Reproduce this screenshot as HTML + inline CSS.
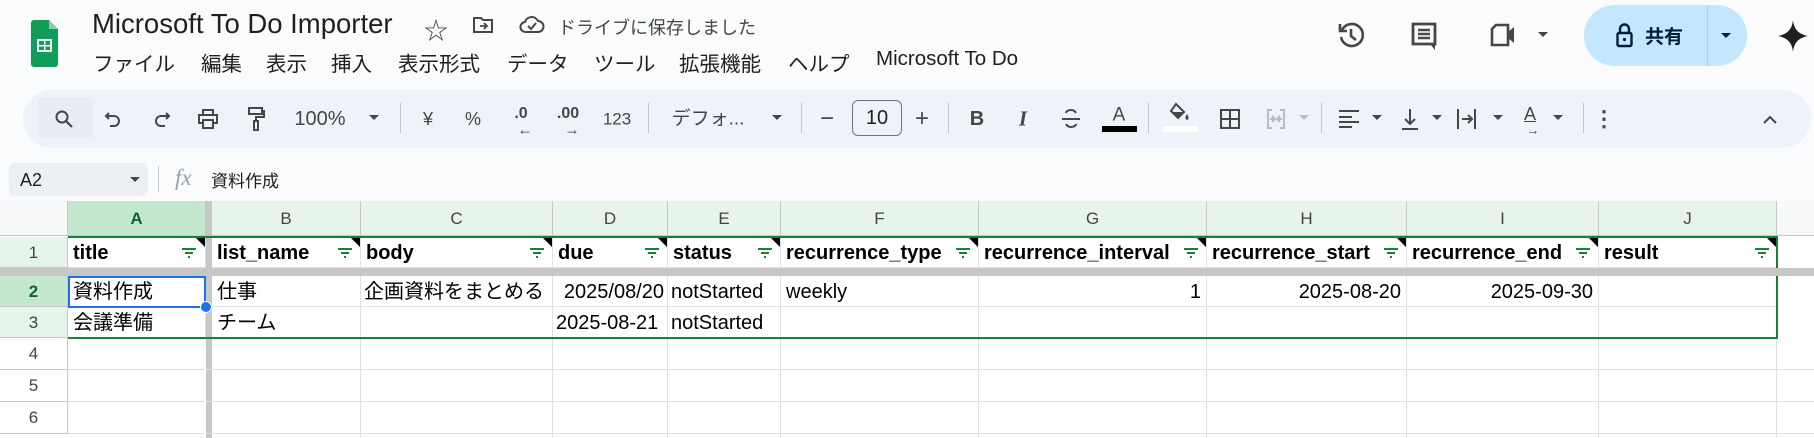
<!DOCTYPE html>
<html><head><meta charset="utf-8"><style>
*{margin:0;padding:0;box-sizing:border-box}
body{width:1814px;height:438px;overflow:hidden;background:#f9fbfd;font-family:"Liberation Sans","Noto Sans CJK JP",sans-serif;color:#1f1f1f;position:relative}
.a{position:absolute;white-space:nowrap}
.menu{top:47px;font-size:20.5px;color:#1f1f1f}
.tb{position:absolute;left:23px;top:90px;width:1788px;height:58px;background:#eef2f9;border-radius:29px}
.ic{position:absolute;top:119px;transform:translate(-50%,-50%);color:#444746;font-size:19px;line-height:1}
.sep{position:absolute;top:103px;width:1px;height:30px;background:#c7c7c7}
.dd{position:absolute;top:115px;width:0;height:0;border-left:5px solid transparent;border-right:5px solid transparent;border-top:5px solid #444746;transform:translateX(-50%)}
.grid{position:absolute;left:0;top:201px;width:1814px;height:237px;background:#fff}
.h{position:absolute;top:0;height:35px;background:#e6f4ea;border-right:1px solid #c7c7c7;border-bottom:1px solid #c7c7c7;color:#444;font-size:17px;text-align:center;line-height:35px}
.rh{position:absolute;left:0;width:68px;border-bottom:1px solid #c7c7c7;border-right:1px solid #c7c7c7;color:#444;font-size:17px;text-align:center}
.c{position:absolute;font-size:20px;color:#000;line-height:33px;height:31px;border-right:1px solid #e1e1e1;border-bottom:1px solid #e1e1e1;padding:0 5px;overflow:hidden}
.b{font-weight:bold}
.f{position:absolute;width:14px;height:10px}
.tri{position:absolute;width:0;height:0;border-top:9px solid #000;border-left:9px solid transparent}
</style></head><body>
<svg class="a" style="left:31px;top:20px" width="27" height="47" viewBox="0 0 27 47"><path d="M3 0h15l9 9v35a3 3 0 0 1-3 3H3a3 3 0 0 1-3-3V3a3 3 0 0 1 3-3z" fill="#0f9d58"/><path d="M18 0l9 9h-9z" fill="#87ceac"/><rect x="6" y="19" width="15" height="13" fill="#fff"/><rect x="8" y="21" width="5" height="4" fill="#0f9d58"/><rect x="14.5" y="21" width="4.5" height="4" fill="#0f9d58"/><rect x="8" y="26.5" width="5" height="3.5" fill="#0f9d58"/><rect x="14.5" y="26.5" width="4.5" height="3.5" fill="#0f9d58"/></svg>
<div class="a" style="left:92px;top:8px;font-size:27.5px;color:#1f1f1f">Microsoft To Do Importer</div>
<div class="a" style="left:424px;top:11px;font-size:24px;color:#444746">☆</div>
<svg class="a" style="left:472px;top:16px" width="22" height="18" viewBox="0 0 22 18"><path d="M2 2h7l2 2h9v12H2z" fill="none" stroke="#444746" stroke-width="2"/><path d="M8 10h7M12 7l3 3-3 3" fill="none" stroke="#444746" stroke-width="1.8"/></svg>
<svg class="a" style="left:519px;top:14px" width="26" height="20" viewBox="0 0 26 20"><path d="M7 18a5 5 0 0 1-1-10 7 7 0 0 1 13-1 5.5 5.5 0 0 1 0 11z" fill="none" stroke="#444746" stroke-width="2"/><path d="M9 12l3 3 5-6" fill="none" stroke="#444746" stroke-width="2"/></svg>
<div class="a" style="left:558px;top:14px;font-size:18px;color:#444746">ドライブに保存しました</div>
<div class="a menu" style="left:93px">ファイル</div>
<div class="a menu" style="left:201px">編集</div>
<div class="a menu" style="left:266px">表示</div>
<div class="a menu" style="left:331px">挿入</div>
<div class="a menu" style="left:398px">表示形式</div>
<div class="a menu" style="left:507px">データ</div>
<div class="a menu" style="left:594px">ツール</div>
<div class="a menu" style="left:679px">拡張機能</div>
<div class="a menu" style="left:788px">ヘルプ</div>
<div class="a menu" style="left:876px">Microsoft To Do</div>
<svg class="a" style="left:1337px;top:21px" width="28" height="28" viewBox="0 0 28 28"><path d="M5 9a11 11 0 1 1-1 7" fill="none" stroke="#444746" stroke-width="2.6"/><path d="M3 3v7h7" fill="none" stroke="#444746" stroke-width="2.6"/><path d="M14 8v7l5 4" fill="none" stroke="#444746" stroke-width="2.6"/></svg>
<svg class="a" style="left:1410px;top:21px" width="28" height="30" viewBox="0 0 28 30"><path d="M3 3h22v20H3z" fill="none" stroke="#444746" stroke-width="2.8"/><path d="M20 23l5 6V22" fill="#444746"/><path d="M8 9h12M8 13h12M8 17h12" stroke="#444746" stroke-width="2.4"/></svg>
<svg class="a" style="left:1490px;top:23px" width="30" height="24" viewBox="0 0 30 24"><path d="M6 2h12v20H2V6z" fill="none" stroke="#444746" stroke-width="2.6"/><path d="M18 9l6-5v16l-6-5z" fill="#444746"/></svg>
<div class="dd" style="left:1543px;top:32px"></div>
<div class="a" style="left:1584px;top:5px;width:163px;height:61px;background:#c2e7ff;border-radius:31px"></div>
<div class="a" style="left:1707px;top:5px;width:1px;height:61px;background:#a8d4f0"></div>
<svg class="a" style="left:1616px;top:22px" width="17" height="26" viewBox="0 0 17 26"><path d="M4 11V7a4.5 4.5 0 0 1 9 0v4" fill="none" stroke="#001d35" stroke-width="2.4"/><rect x="1.5" y="11" width="14" height="13" rx="1.5" fill="none" stroke="#001d35" stroke-width="2.4"/><circle cx="8.5" cy="17.5" r="1.6" fill="#001d35"/></svg>
<div class="a" style="left:1645px;top:22px;font-size:19px;font-weight:bold;color:#001d35">共有</div>
<div class="dd" style="left:1726px;top:33px;border-top-color:#001d35"></div>
<svg class="a" style="left:1778px;top:20px" width="30" height="32" viewBox="0 0 30 32"><path d="M15 0C16 9 20 14 30 16 20 18 16 23 15 32 14 23 10 18 0 16 10 14 14 9 15 0z" fill="#1f1f1f"/></svg>
<div class="tb"></div>
<div class="a" style="left:38px;top:97px;width:55px;height:41px;background:#e7ecf5;border-radius:4px"></div>
<svg class="ic" style="left:64px" width="20" height="20" viewBox="0 0 20 20"><circle cx="8" cy="8" r="5.5" fill="none" stroke="#444746" stroke-width="2"/><path d="M12 12l6 6" stroke="#444746" stroke-width="2.2"/></svg>
<svg class="ic" style="left:113px" width="18" height="18" viewBox="0 0 18 18"><path d="M5 3L2 6l3 3M2 6h8a5 5 0 0 1 0 10H6" fill="none" stroke="#444746" stroke-width="2"/></svg>
<svg class="ic" style="left:162px" width="18" height="18" viewBox="0 0 18 18"><path d="M13 3l3 3-3 3M16 6H8a5 5 0 0 0 0 10h4" fill="none" stroke="#444746" stroke-width="2"/></svg>
<svg class="ic" style="left:208px" width="22" height="20" viewBox="0 0 22 20"><path d="M6 6V1h10v5M6 14H2V6h18v8h-4M6 11h10v8H6z" fill="none" stroke="#444746" stroke-width="2"/></svg>
<svg class="ic" style="left:256px" width="18" height="24" viewBox="0 0 18 24"><path d="M2 1h13v6H2zM15 4h2v6H9v4M7 14h4v9H7z" fill="none" stroke="#444746" stroke-width="2"/></svg>
<div class="ic" style="left:320px;font-size:20px">100%</div>
<div class="dd" style="left:374px"></div>
<div class="sep" style="left:400px"></div>
<div class="ic" style="left:428px;font-size:18px">¥</div>
<div class="ic" style="left:473px;font-size:18px">%</div>
<div class="ic" style="left:521px;font-size:16px;font-weight:bold;top:114px">.0</div><div class="ic b" style="left:525px;font-size:15px;top:130px">←</div>
<div class="ic" style="left:568px;font-size:16px;font-weight:bold;top:114px">.00</div><div class="ic b" style="left:572px;font-size:15px;top:130px">→</div>
<div class="ic" style="left:617px;font-size:17px">123</div>
<div class="sep" style="left:648px"></div>
<div class="ic" style="left:708px;font-size:19px">デフォ...</div>
<div class="dd" style="left:777px"></div>
<div class="sep" style="left:801px"></div>
<div class="ic" style="left:827px;font-size:24px">−</div>
<div class="a" style="left:852px;top:100px;width:50px;height:36px;border:1px solid #747775;border-radius:6px;font-size:20px;text-align:center;line-height:34px">10</div>
<div class="ic" style="left:922px;font-size:24px">+</div>
<div class="sep" style="left:948px"></div>
<div class="ic b" style="left:977px;font-size:20px">B</div>
<div class="ic b" style="left:1023px;font-size:21px;font-style:italic;font-family:'Liberation Serif',serif">I</div>
<svg class="ic" style="left:1071px" width="20" height="22" viewBox="0 0 20 22"><path d="M15 5c-1-2-3-3-5-3S5 3 5 5M1 11h18M5 16c1 2 3 3 5 3s5-1 5-3" fill="none" stroke="#444746" stroke-width="2"/></svg>
<div class="ic" style="left:1119px;font-size:19px;top:115px">A</div>
<div class="a" style="left:1102px;top:126px;width:35px;height:6px;background:#000"></div>
<div class="sep" style="left:1148px"></div>
<svg class="ic" style="left:1179px;top:113px" width="24" height="22" viewBox="0 0 24 22"><path d="M9 2l8 8-6 6-7-7z" fill="none" stroke="#444746" stroke-width="2"/><path d="M5 10h11l-5 5z" fill="#444746"/><path d="M20 12c-2 3-2 5 0 6 2-1 2-3 0-6z" fill="#444746"/></svg>
<div class="a" style="left:1163px;top:126px;width:35px;height:6px;background:#fff"></div>
<svg class="ic" style="left:1230px" width="22" height="22" viewBox="0 0 22 22"><path d="M2 2h18v18H2zM11 2v18M2 11h18" fill="none" stroke="#444746" stroke-width="2"/></svg>
<svg class="ic" style="left:1276px" width="20" height="22" viewBox="0 0 20 22"><path d="M6 2H2v18h4M14 2h4v18h-4M4 11h4M16 11h-4M6 8l3 3-3 3M14 8l-3 3 3 3" fill="none" stroke="#b8bcc1" stroke-width="2"/></svg>
<div class="dd" style="left:1304px;border-top-color:#b8bcc1"></div>
<div class="sep" style="left:1321px"></div>
<svg class="ic" style="left:1349px" width="22" height="20" viewBox="0 0 22 20"><path d="M1 2h20M1 8h13M1 13h20M1 18h13" stroke="#444746" stroke-width="2"/></svg>
<div class="dd" style="left:1377px"></div>
<svg class="ic" style="left:1410px" width="20" height="22" viewBox="0 0 20 22"><path d="M10 1v15M5 11l5 5 5-5M2 21h16" fill="none" stroke="#444746" stroke-width="2"/></svg>
<div class="dd" style="left:1437px"></div>
<svg class="ic" style="left:1467px" width="22" height="22" viewBox="0 0 22 22"><path d="M2 1v20M19 1v20M6 11h9M12 7l4 4-4 4" fill="none" stroke="#444746" stroke-width="2"/></svg>
<div class="dd" style="left:1498px"></div>
<div class="ic" style="left:1530px;font-size:18px;top:114px;text-decoration:underline">A</div><div class="ic" style="left:1533px;font-size:13px;top:130px">→</div>
<div class="dd" style="left:1558px"></div>
<div class="sep" style="left:1583px"></div>
<div class="ic b" style="left:1604px;font-size:22px">⋮</div>
<svg class="ic" style="left:1770px" width="16" height="10" viewBox="0 0 16 10"><path d="M2 9l6-6 6 6" fill="none" stroke="#444746" stroke-width="2"/></svg>
<div class="a" style="left:9px;top:163px;width:139px;height:33px;background:#eceff3;border-radius:6px"></div>
<div class="a" style="left:20px;top:170px;font-size:18px">A2</div>
<div class="dd" style="left:135px;top:177px"></div>
<div class="a" style="left:158px;top:166px;width:1px;height:26px;background:#c7c7c7"></div>
<div class="a" style="left:175px;top:165px;font-size:23px;font-style:italic;color:#9aa0a6;font-family:'Liberation Serif',serif">fx</div>
<div class="a" style="left:211px;top:167px;font-size:17px">資料作成</div>
<div class="grid">
<div class="a" style="left:0;top:0;width:1814px;height:1px;background:#c7c7c7"></div>
<div class="h" style="left:0;width:68px;background:#f8f9fa"></div>
<div class="h" style="left:68px;width:138px;background:#c4e7cf;color:#0d652d;font-weight:bold">A</div>
<div class="h" style="left:212px;width:149px">B</div>
<div class="h" style="left:361px;width:192px">C</div>
<div class="h" style="left:553px;width:115px">D</div>
<div class="h" style="left:668px;width:113px">E</div>
<div class="h" style="left:781px;width:198px">F</div>
<div class="h" style="left:979px;width:228px">G</div>
<div class="h" style="left:1207px;width:200px">H</div>
<div class="h" style="left:1407px;width:192px">I</div>
<div class="h" style="left:1599px;width:178px">J</div>
<div class="h" style="left:1777px;width:37px;background:#f8f9fa;border-right:none"></div>
<div class="rh" style="top:36px;height:31px;line-height:31px;background:#e6f4ea">1</div>
<div class="rh" style="top:75px;height:31px;line-height:31px;background:#c4e7cf;color:#0d652d;font-weight:bold">2</div>
<div class="rh" style="top:106px;height:31px;line-height:31px;background:#e6f4ea">3</div>
<div class="rh" style="top:137px;height:32px;line-height:32px;background:#fff">4</div>
<div class="rh" style="top:169px;height:32px;line-height:32px;background:#fff">5</div>
<div class="rh" style="top:201px;height:32px;line-height:32px;background:#fff">6</div>
<div class="c b" style="left:68px;top:36px;width:138px">title</div>
<div class="c b" style="left:212px;top:36px;width:149px">list_name</div>
<div class="c b" style="left:361px;top:36px;width:192px">body</div>
<div class="c b" style="left:553px;top:36px;width:115px">due</div>
<div class="c b" style="left:668px;top:36px;width:113px">status</div>
<div class="c b" style="left:781px;top:36px;width:198px">recurrence_type</div>
<div class="c b" style="left:979px;top:36px;width:228px">recurrence_interval</div>
<div class="c b" style="left:1207px;top:36px;width:200px">recurrence_start</div>
<div class="c b" style="left:1407px;top:36px;width:192px">recurrence_end</div>
<div class="c b" style="left:1599px;top:36px;width:178px">result</div>
<div class="a" style="left:0;top:67px;width:1814px;height:8px;background:#c7c7c7"></div>
<div class="a" style="left:206px;top:0;width:6px;height:237px;background:#c7c7c7"></div>
<div class="c" style="left:68px;top:75px;width:138px">資料作成</div>
<div class="c" style="left:212px;top:75px;width:149px">仕事</div>
<div class="c" style="left:361px;top:75px;width:192px;padding:0 3px">企画資料をまとめる</div>
<div class="c" style="left:553px;top:75px;width:115px;text-align:right;padding:0 3px">2025/08/20</div>
<div class="c" style="left:668px;top:75px;width:113px;padding:0 3px">notStarted</div>
<div class="c" style="left:781px;top:75px;width:198px">weekly</div>
<div class="c" style="left:979px;top:75px;width:228px;text-align:right">1</div>
<div class="c" style="left:1207px;top:75px;width:200px;text-align:right">2025-08-20</div>
<div class="c" style="left:1407px;top:75px;width:192px;text-align:right">2025-09-30</div>
<div class="c" style="left:1599px;top:75px;width:178px"></div>
<div class="c" style="left:68px;top:106px;width:138px">会議準備</div>
<div class="c" style="left:212px;top:106px;width:149px">チーム</div>
<div class="c" style="left:361px;top:106px;width:192px"></div>
<div class="c" style="left:553px;top:106px;width:115px;padding:0 3px">2025-08-21</div>
<div class="c" style="left:668px;top:106px;width:113px;padding:0 3px">notStarted</div>
<div class="c" style="left:781px;top:106px;width:198px"></div>
<div class="c" style="left:979px;top:106px;width:228px"></div>
<div class="c" style="left:1207px;top:106px;width:200px"></div>
<div class="c" style="left:1407px;top:106px;width:192px"></div>
<div class="c" style="left:1599px;top:106px;width:178px"></div>
<div class="a" style="left:68px;top:168px;width:1746px;height:1px;background:#e1e1e1"></div>
<div class="a" style="left:68px;top:200px;width:1746px;height:1px;background:#e1e1e1"></div>
<div class="a" style="left:68px;top:232px;width:1746px;height:1px;background:#e1e1e1"></div>
<div class="a" style="left:360px;top:137px;width:1px;height:100px;background:#e1e1e1"></div>
<div class="a" style="left:552px;top:137px;width:1px;height:100px;background:#e1e1e1"></div>
<div class="a" style="left:667px;top:137px;width:1px;height:100px;background:#e1e1e1"></div>
<div class="a" style="left:780px;top:137px;width:1px;height:100px;background:#e1e1e1"></div>
<div class="a" style="left:978px;top:137px;width:1px;height:100px;background:#e1e1e1"></div>
<div class="a" style="left:1206px;top:137px;width:1px;height:100px;background:#e1e1e1"></div>
<div class="a" style="left:1406px;top:137px;width:1px;height:100px;background:#e1e1e1"></div>
<div class="a" style="left:1598px;top:137px;width:1px;height:100px;background:#e1e1e1"></div>
<div class="a" style="left:1776px;top:137px;width:1px;height:100px;background:#e1e1e1"></div>
<div class="a" style="left:68px;top:35px;width:1710px;height:2px;background:#188038"></div>
<div class="a" style="left:68px;top:136px;width:1710px;height:2px;background:#188038"></div>
<div class="a" style="left:1776px;top:35px;width:2px;height:32px;background:#188038"></div>
<div class="a" style="left:1776px;top:75px;width:2px;height:63px;background:#188038"></div>
<svg width="0" height="0" style="position:absolute"><defs><g id="fi"><path d="M0 1h14M3 5h8M6 9h2" stroke="#188038" stroke-width="2"/></g></defs></svg>
<svg class="f" style="left:182px;top:47px"><use href="#fi"/></svg>
<svg class="f" style="left:338px;top:47px"><use href="#fi"/></svg>
<svg class="f" style="left:530px;top:47px"><use href="#fi"/></svg>
<svg class="f" style="left:645px;top:47px"><use href="#fi"/></svg>
<svg class="f" style="left:758px;top:47px"><use href="#fi"/></svg>
<svg class="f" style="left:956px;top:47px"><use href="#fi"/></svg>
<svg class="f" style="left:1184px;top:47px"><use href="#fi"/></svg>
<svg class="f" style="left:1384px;top:47px"><use href="#fi"/></svg>
<svg class="f" style="left:1576px;top:47px"><use href="#fi"/></svg>
<svg class="f" style="left:1755px;top:47px"><use href="#fi"/></svg>
<div class="tri" style="left:196px;top:37px"></div>
<div class="tri" style="left:351px;top:37px"></div>
<div class="tri" style="left:543px;top:37px"></div>
<div class="tri" style="left:658px;top:37px"></div>
<div class="tri" style="left:771px;top:37px"></div>
<div class="tri" style="left:969px;top:37px"></div>
<div class="tri" style="left:1197px;top:37px"></div>
<div class="tri" style="left:1397px;top:37px"></div>
<div class="tri" style="left:1589px;top:37px"></div>
<div class="tri" style="left:1767px;top:37px"></div>
<div class="a" style="left:68px;top:75px;width:138px;height:32px;border:2px solid #1a73e8"></div>
<div class="a" style="left:200px;top:100px;width:12px;height:12px;border-radius:50%;background:#1a73e8;border:1px solid #fff"></div>
</div>
</body></html>
